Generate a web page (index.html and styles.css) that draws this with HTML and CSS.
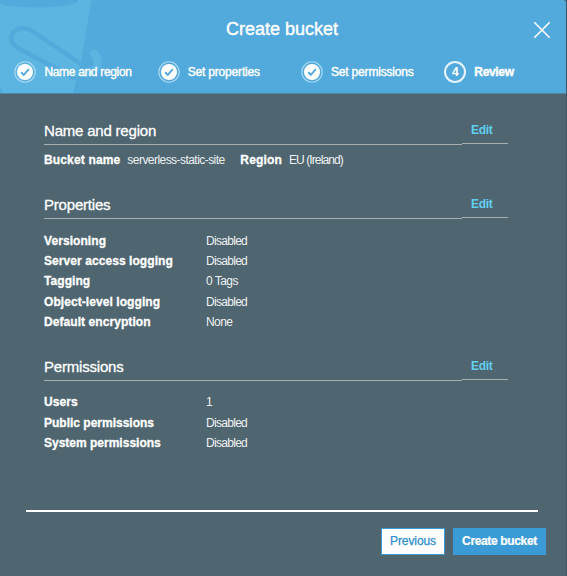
FILE: index.html
```html
<!DOCTYPE html>
<html lang="en">
<head>
<meta charset="utf-8">
<title>Create bucket</title>
<link rel="stylesheet" href="styles.css">
</head>
<body>
<div class="dialog">
  <header class="header">
    <svg class="bucket" width="110" height="93" viewBox="0 0 110 93" aria-hidden="true">
      <path class="bucket-body" d="M0 0H91.5L81 61L73 93H3L0 86Z"/>
      <path class="bucket-rim" d="M0 0H78V2C66 9 15 9 0 4Z"/>
      <path class="bucket-hook" d="M94 53.5C99 59 99 66 94 70C89 74 82 74 74 71"/>
      <path class="bucket-handle" d="M74 78L17 47.5C9 42 10 32 18 29C25 26.5 30 29.5 36 33.5L78 62C83 65 88 66 91 62"/>
    </svg>
    <h1 class="title">Create bucket</h1>
    <button class="close" aria-label="Close"><svg width="18" height="18" viewBox="0 0 18 18"><path d="M1.3 1.3L16.7 16.7M16.7 1.3L1.3 16.7"/></svg></button>
    <ol class="steps">
      <li class="step"><svg class="mark" viewBox="0 0 22 22"><circle class="ring" cx="11" cy="11" r="10.2"/><circle class="disc" cx="11" cy="11" r="8"/><path class="check" d="M7.1 11.3L9.8 13.8L14.8 8.1"/></svg><span>Name and region</span></li>
      <li class="step spaced"><svg class="mark" viewBox="0 0 22 22"><circle class="ring" cx="11" cy="11" r="10.2"/><circle class="disc" cx="11" cy="11" r="8"/><path class="check" d="M7.1 11.3L9.8 13.8L14.8 8.1"/></svg><span>Set properties</span></li>
      <li class="step spaced"><svg class="mark" viewBox="0 0 22 22"><circle class="ring" cx="11" cy="11" r="10.2"/><circle class="disc" cx="11" cy="11" r="8"/><path class="check" d="M7.1 11.3L9.8 13.8L14.8 8.1"/></svg><span>Set permissions</span></li>
      <li class="step current"><b class="number">4</b><span>Review</span></li>
    </ol>
  </header>
  <main class="content">
    <section class="section">
      <div class="section-head"><h2>Name and region</h2><a class="edit">Edit</a></div>
      <div class="inline-facts"><b>Bucket name</b><span class="value bucket-name">serverless-static-site</span><b>Region</b><span class="value region">EU (Ireland)</span></div>
    </section>
    <section class="section properties">
      <div class="section-head"><h2>Properties</h2><a class="edit">Edit</a></div>
      <dl class="facts">
        <dt>Versioning</dt><dd class="value">Disabled</dd>
        <dt>Server access logging</dt><dd class="value">Disabled</dd>
        <dt>Tagging</dt><dd class="value tags">0 Tags</dd>
        <dt>Object-level logging</dt><dd class="value">Disabled</dd>
        <dt>Default encryption</dt><dd class="value tags">None</dd>
      </dl>
    </section>
    <section class="section">
      <div class="section-head"><h2>Permissions</h2><a class="edit">Edit</a></div>
      <dl class="facts">
        <dt>Users</dt><dd class="value">1</dd>
        <dt class="tight">Public permissions</dt><dd class="value">Disabled</dd>
        <dt class="tight">System permissions</dt><dd class="value">Disabled</dd>
      </dl>
    </section>
  </main>
  <footer class="footer">
    <button class="btn previous">Previous</button>
    <button class="btn create">Create bucket</button>
  </footer>
</div>
</body>
</html>
```
FILE: styles.css
```css
* { box-sizing: border-box; }
body {
  margin: 0;
  background: #40545f;
  font: 12px/20.4px "Liberation Sans", Arial, sans-serif;
  color: #fff;
}
.dialog {
  width: 566px;
  height: 576px;
  display: flex;
  flex-direction: column;
  background: #4f6570;
}
h1, h2, ol, dl, dd { margin: 0; padding: 0; }
button { margin: 0; padding: 0; font: inherit; }

.header {
  position: relative;
  height: 94px;
  padding-top: 17px;
  background: #52a9db;
  border-bottom: 1px solid #4d86a5;
  border-top-right-radius: 3px;
}
.bucket { position: absolute; left: 0; top: 0; }
.bucket-body { fill: #5cb5e1; }
.bucket-hook { fill: none; stroke: #5cb5e1; stroke-width: 8; stroke-linecap: round; }
.bucket-rim { fill: #52a9db; }
.bucket-handle { fill: none; stroke: #52a9db; stroke-width: 4.5; stroke-linecap: round; }
.title {
  position: relative;
  padding-right: 2px;
  font-size: 18px;
  font-weight: 400;
  line-height: 24px;
  text-align: center;
  -webkit-text-stroke: 0.4px #fff;
}
.close {
  position: absolute;
  right: 15px;
  top: 21px;
  width: 18px;
  height: 18px;
  border: 0;
  background: none;
}
.close svg { display: block; fill: none; stroke: #fff; stroke-width: 1.6; }
.steps {
  position: relative;
  display: grid;
  grid-template-columns: repeat(4, 143.3px);
  margin: 20px 0 0 14.4px;
  width: 550px;
  list-style: none;
}
.step {
  display: flex;
  align-items: center;
  gap: 8px;
  height: 22px;
  letter-spacing: -0.32px;
  white-space: nowrap;
  -webkit-text-stroke: 0.4px #fff;
}
.step.spaced { letter-spacing: -0.18px; }
.mark { width: 22px; height: 22px; }
.ring { fill: none; stroke: #b2daf1; stroke-width: 1.1; }
.disc { fill: #fff; }
.check { fill: none; stroke: #52a9db; stroke-width: 1.9; }
.current { font-weight: 700; }
.number {
  width: 22px;
  height: 22px;
  border: 2px solid #e8f4fb;
  border-radius: 50%;
  line-height: 19px;
  text-align: center;
  letter-spacing: 0;
  -webkit-text-stroke: 0;
}

.content {
  flex: 1;
  padding: 26px 58px 0 44px;
}
.section { height: 74px; }
.section.properties { height: 161.5px; }
.section-head { display: flex; align-items: flex-start; }
.section-head h2 {
  width: 418px;
  height: 25px;
  border-bottom: 1px solid #a8afb3;
  font-size: 15px;
  font-weight: 400;
  line-height: 22px;
  letter-spacing: -0.2px;
  -webkit-text-stroke: 0.3px #fff;
}
.edit {
  width: 46px;
  height: 24px;
  padding-left: 9px;
  border-bottom: 1px solid #a8afb3;
  color: #61d0f0;
  font-weight: 700;
  line-height: 20px;
  letter-spacing: -0.3px;
}
.inline-facts { display: flex; margin-top: 5px; }
.inline-facts b, dt { font-weight: 700; letter-spacing: 0.07px; -webkit-text-stroke: 0.3px #fff; }
.inline-facts b { letter-spacing: 0.15px; }
dt.tight { letter-spacing: 0; }
.value { color: #eef1f2; letter-spacing: -0.7px; }
.value.tags { letter-spacing: -0.55px; }
.value.bucket-name { width: 113px; margin-left: 7px; letter-spacing: -0.55px; }
.value.region { margin-left: 7px; letter-spacing: -0.9px; }
.facts {
  display: grid;
  grid-template-columns: 162px 1fr;
  margin-top: 11.6px;
}

.footer {
  display: flex;
  gap: 8px;
  justify-content: flex-end;
  height: 66px;
  margin: 0 20px 0 26px;
  padding-top: 18px;
  background: linear-gradient(#fff, #fff) 0 0 / 512px 2px no-repeat;
}
.btn { height: 27px; border: 1px solid #3a9bd7; line-height: 25px; }
.previous { width: 64px; background: #fff; color: #2c8ccb; letter-spacing: -0.1px; -webkit-text-stroke: 0.25px #2c8ccb; }
.create { width: 93px; background: #3a9bd7; color: #fff; font-weight: 700; letter-spacing: -0.35px; -webkit-text-stroke: 0.2px #fff; }
```
